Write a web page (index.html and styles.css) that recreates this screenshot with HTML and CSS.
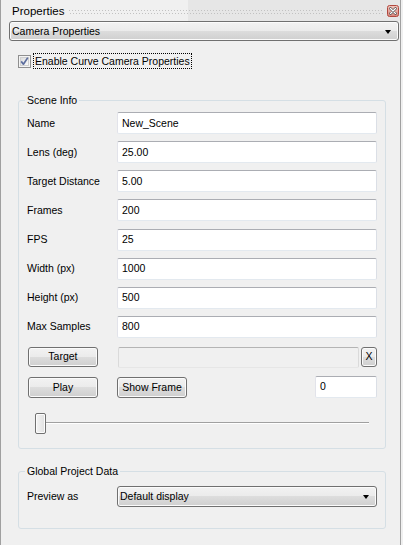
FILE: index.html
```html
<!DOCTYPE html>
<html>
<head>
<meta charset="utf-8">
<link rel="stylesheet" href="styles.css">
</head>
<body>
<div class="panel">
  <div class="titlebar">
    <span class="title">Properties</span>
    <span class="grip"></span>
    <span class="close">
      <svg width="12" height="12" viewBox="0 0 12 12">
        <defs>
          <linearGradient id="cg" x1="0" y1="0" x2="0" y2="1">
            <stop offset="0" stop-color="#f4c8c0"/>
            <stop offset="1" stop-color="#d8847a"/>
          </linearGradient>
        </defs>
        <rect x="0.5" y="0.5" width="11" height="11" rx="2" fill="url(#cg)" stroke="#b0483e"/>
        <path d="M3.5 3.5 L8.5 8.5 M8.5 3.5 L3.5 8.5" stroke="#5a5a5a" stroke-width="2.6" stroke-linecap="round"/>
        <path d="M3.5 3.5 L8.5 8.5 M8.5 3.5 L3.5 8.5" stroke="#ffffff" stroke-width="1.1" stroke-linecap="round"/>
      </svg>
    </span>
  </div>

  <div class="combo camera">
    <span class="combo-text">Camera Properties</span>
    <span class="arrow"></span>
  </div>

  <div class="check-row">
    <span class="checkbox">
      <svg width="13" height="13" viewBox="0 0 13 13">
        <defs>
          <linearGradient id="kg" x1="0" y1="0" x2="1" y2="1">
            <stop offset="0" stop-color="#dcdcdc"/>
            <stop offset="1" stop-color="#fbfbfb"/>
          </linearGradient>
        </defs>
        <rect x="0.5" y="0.5" width="12" height="12" fill="#f4f4f4" stroke="#8f8f8f"/>
        <rect x="2.5" y="2.5" width="8" height="8" fill="url(#kg)" stroke="#d0d0d0"/>
        <path d="M3.2 6.4 L5.4 9.2 L9.8 2.6" fill="none" stroke="#5d6e9e" stroke-width="1.7" stroke-linejoin="round"/>
      </svg>
    </span>
    <span class="check-label">Enable Curve Camera Properties</span>
  </div>

  <fieldset class="group scene">
    <legend>Scene Info</legend>
    <div class="fields">
      <span class="lbl">Name</span><div class="input">New_Scene</div>
      <span class="lbl">Lens (deg)</span><div class="input">25.00</div>
      <span class="lbl">Target Distance</span><div class="input">5.00</div>
      <span class="lbl">Frames</span><div class="input">200</div>
      <span class="lbl">FPS</span><div class="input">25</div>
      <span class="lbl">Width (px)</span><div class="input">1000</div>
      <span class="lbl">Height (px)</span><div class="input">500</div>
      <span class="lbl">Max Samples</span><div class="input">800</div>
    </div>

    <div class="btnrow target-row">
      <div class="btn wide">Target</div>
      <div class="input disabled"></div>
      <div class="btn xbtn">X</div>
    </div>

    <div class="btnrow play-row">
      <div class="btn wide">Play</div>
      <div class="btn frame">Show Frame</div>
      <div class="spacer"></div>
      <div class="input spin">0</div>
    </div>

    <div class="slider">
      <div class="handle"></div>
    </div>
  </fieldset>

  <fieldset class="group global">
    <legend>Global Project Data</legend>
    <div class="fields">
      <span class="lbl">Preview as</span>
      <div class="combo preview">
        <span class="combo-text">Default display</span>
        <span class="arrow"></span>
      </div>
    </div>
  </fieldset>
</div>
</body>
</html>
```

FILE: styles.css
```css
html, body {
  margin: 0;
  padding: 0;
}

body {
  width: 403px;
  height: 545px;
  overflow: hidden;
  background: #f0f0f0;
  font-family: "Liberation Sans", Arial, sans-serif;
  font-size: 10.5px;
  color: #000;
}

.panel {
  box-sizing: border-box;
  width: 401px;
  height: 545px;
  border-left: 1px solid #a0a0a0;
  border-right: 1px solid #a0a0a0;
  display: flex;
  flex-direction: column;
  align-items: flex-start;
}

/* title bar */
.titlebar {
  box-sizing: border-box;
  width: 100%;
  height: 21px;
  display: flex;
  align-items: center;
  padding-left: 11px;
  padding-right: 1px;
  background: linear-gradient(90deg, transparent 187px, #e6e6e6 187px);
}

.title {
  font-size: 11.5px;
  line-height: 14px;
}

.grip {
  flex: 1;
  height: 4px;
  margin: 2px 3px 0 5px;
  background-image:
    linear-gradient(90deg, #c2c2c2 1px, transparent 1px),
    linear-gradient(90deg, #c2c2c2 1px, transparent 1px);
  background-size: 3px 1px, 3px 1px;
  background-position: 0 0, 1px 3px;
  background-repeat: repeat-x;
}

.close {
  width: 12px;
  height: 12px;
  display: block;
}

.close svg {
  display: block;
}

/* combo boxes */
.combo {
  box-sizing: border-box;
  display: flex;
  align-items: center;
  border: 1px solid #707070;
  border-radius: 3px;
  background: linear-gradient(#f2f2f2 0%, #ebebeb 50%, #dddddd 50%, #cfcfcf 100%);
  box-shadow: inset 0 0 0 1px #fbfbfb;
  padding: 0 7px 0 2px;
}

.combo-text {
  flex: 1;
  line-height: 13px;
}

.arrow {
  width: 0;
  height: 0;
  border-left: 3.5px solid transparent;
  border-right: 3.5px solid transparent;
  border-top: 4px solid #000;
  margin-top: 1px;
}

.camera {
  width: 390px;
  height: 20px;
  margin-left: 8px;
}

.preview {
  height: 21px;
}

/* checkbox */
.check-row {
  display: flex;
  align-items: center;
  margin-top: 12px;
  padding-left: 17px;
  height: 16px;
}

.checkbox {
  width: 13px;
  height: 13px;
  display: block;
  margin-top: 1px;
}

.checkbox svg {
  display: block;
}

.check-label {
  margin-left: 2px;
  border: 1px dotted #000;
  padding: 0 1px;
  line-height: 14px;
}

/* group boxes */
.group {
  box-sizing: border-box;
  width: 368px;
  margin: 0 0 0 17px;
  border: 1px solid #d5dfe5;
  border-radius: 3px;
  padding: 0 8px;
  min-inline-size: 0;
}

.group legend {
  padding: 0 2px;
  margin-left: -2px;
  line-height: 13px;
  font-size: 10.5px;
}

.scene {
  margin-top: 24.5px;
  padding-top: 5.5px;
  padding-bottom: 14px;
}

.global {
  margin-top: 16.5px;
  padding-top: 7.5px;
  padding-bottom: 21px;
}

.fields {
  display: grid;
  grid-template-columns: 90px 1fr;
  row-gap: 7.14px;
  align-items: center;
}

.lbl {
  line-height: 13px;
}

.input {
  box-sizing: border-box;
  height: 22px;
  background: #fff;
  border: 1px solid;
  border-color: #abadb3 #dbdfe6 #e3e9ef #e2e3ea;
  border-radius: 2px;
  padding: 0 4px;
  display: flex;
  align-items: center;
  line-height: 13px;
}

.input.disabled {
  background: #f0f0f0;
  border-color: #b4b4b4 #dadada #e6e6e6 #dadada;
  height: 21px;
  width: 242px;
  margin-left: 20px;
}

.input.spin {
  width: 62px;
}

/* buttons */
.btnrow {
  display: flex;
}

.target-row {
  margin-top: 9px;
  height: 21px;
  align-items: flex-start;
}

.play-row {
  margin-top: 8px;
  height: 22px;
  align-items: flex-end;
}

.btn {
  box-sizing: border-box;
  height: 20px;
  border: 1px solid #707070;
  border-radius: 3px;
  background: linear-gradient(#f2f2f2 0%, #ebebeb 50%, #dddddd 50%, #cfcfcf 100%);
  box-shadow: inset 0 0 0 1px #fbfbfb;
  display: flex;
  align-items: center;
  justify-content: center;
  line-height: 13px;
}

.btn.wide {
  width: 70px;
  margin-left: 1px;
}

.play-row .btn {
  height: 21px;
}

.btn.frame {
  width: 70px;
  margin-left: 19px;
}

.btn.xbtn {
  width: 16px;
  margin-left: 2px;
}

.spacer {
  flex: 1;
}

/* slider */
.slider {
  height: 21px;
  margin: 15px 8px 0 8px;
  background:
    linear-gradient(#a0a0a0, #a0a0a0) 0 9px / 100% 1px no-repeat,
    linear-gradient(#ffffff, #ffffff) 0 10px / 100% 1px no-repeat;
}

.handle {
  box-sizing: border-box;
  width: 11px;
  height: 21px;
  border: 1px solid #707070;
  border-radius: 2px;
  background: linear-gradient(90deg, #f4f4f4, #e0e0e0);
  box-shadow: inset 0 0 0 1px #fcfcfc;
}
```
